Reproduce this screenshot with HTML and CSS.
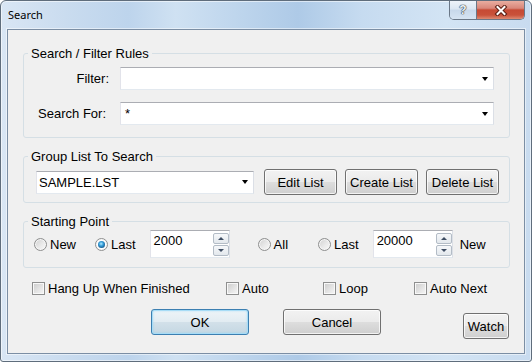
FILE: index.html
```html
<!DOCTYPE html>
<html lang="en">
<head>
  <meta charset="UTF-8" />
  <meta name="viewport" content="width=device-width, initial-scale=1" />
  <title>Search</title>
  <link rel="stylesheet" href="styles.css">
</head>
<body>
  <div class="window">
    <div class="titlebar">
      <span class="title">Search</span>
      <div class="caption-btns">
        <span class="cap-help">?</span>
        <span class="cap-close">
          <svg width="14" height="11" viewBox="0 0 14 11">
            <path d="M3.5 2 L10.5 9 M10.5 2 L3.5 9" stroke="#5a1d12" stroke-width="4" stroke-linecap="square" fill="none"/>
            <path d="M3.5 2 L10.5 9 M10.5 2 L3.5 9" stroke="#fff" stroke-width="2" stroke-linecap="square" fill="none"/>
          </svg>
        </span>
      </div>
    </div>

    <div class="client">
      <fieldset class="group">
        <legend>Search / Filter Rules</legend>
        <div class="rules">
          <span class="rule-label">Filter:</span>
          <div class="combo combo-wide"><span class="combo-text"></span><span class="combo-arrow"></span></div>
          <span class="rule-label rule-label-search">Search For:</span>
          <div class="combo combo-wide"><span class="combo-text">*</span><span class="combo-arrow"></span></div>
        </div>
      </fieldset>

      <fieldset class="group group-list">
        <legend>Group List To Search</legend>
        <div class="list-row">
          <div class="combo combo-list"><span class="combo-text">SAMPLE.LST</span><span class="combo-arrow"></span></div>
          <button class="btn btn-list btn-edit">Edit List</button>
          <button class="btn btn-list">Create List</button>
          <button class="btn btn-list">Delete List</button>
        </div>
      </fieldset>

      <fieldset class="group group-start">
        <legend>Starting Point</legend>
        <div class="start-row">
          <label class="radio"><span class="radio-dot"></span>New</label>
          <label class="radio radio-last"><span class="radio-dot checked"></span>Last</label>
          <div class="spin spin-first">
            <span class="spin-value">2000</span>
            <span class="spin-btns"><span class="spin-up"></span><span class="spin-down"></span></span>
          </div>
          <label class="radio radio-all"><span class="radio-dot"></span>All</label>
          <label class="radio radio-last2"><span class="radio-dot"></span>Last</label>
          <div class="spin spin-second">
            <span class="spin-value">20000</span>
            <span class="spin-btns"><span class="spin-up"></span><span class="spin-down"></span></span>
          </div>
          <span class="start-new">New</span>
        </div>
      </fieldset>

      <div class="checks">
        <label class="check"><span class="check-box"></span>Hang Up When Finished</label>
        <label class="check"><span class="check-box"></span>Auto</label>
        <label class="check"><span class="check-box"></span>Loop</label>
        <label class="check"><span class="check-box"></span>Auto Next</label>
      </div>

      <div class="actions">
        <button class="btn btn-main btn-default">OK</button>
        <button class="btn btn-main btn-cancel">Cancel</button>
        <button class="btn btn-watch">Watch</button>
      </div>
    </div>
  </div>
</body>
</html>
```

FILE: styles.css
```css
:root {
  --font-ui: 'Liberation Sans', Arial, sans-serif;
  --font-title: 'Noto Sans', 'Liberation Sans', sans-serif;
  --client-bg: #f0f0f0;
  --group-border: #d5dfe5;
  --btn-border: #707070;
  --edit-border: #abadb3 #dbdfe6 #e3e9ef #e2e3ea;
}
*, *::before, *::after { box-sizing: border-box; }

html, body {
  margin: 0;
  padding: 0;
}
body {
  width: 532px;
  height: 362px;
  overflow: hidden;
  font-family: var(--font-ui);
  font-size: 13px;
  line-height: 15px;
  color: #000;
  background: #fff;
}

/* window frame */
.window {
  width: 532px;
  height: 362px;
  display: flex;
  flex-direction: column;
  padding: 0 6px 7px;
  border: 1px solid #5f6d7c;
  border-radius: 6px 6px 3px 3px;
  background:
    linear-gradient(to right, #d9e6f4 0%, #cadcef 12%, #bdd4ec 24%, #cfe1f2 33%, #bfd6ed 44%, #aecae7 56%, #c6dbf0 68%, #d3e4f4 84%, #c8dbef 100%);
  box-shadow: inset 0 0 0 1px rgba(255,255,255,0.55);
}
.titlebar {
  height: 28px;
  display: flex;
  align-items: flex-start;
}
.title {
  align-self: center;
  padding-left: 1px;
  font-family: var(--font-title);
  font-size: 11px;
  line-height: 14px;
}
.caption-btns {
  margin-left: auto;
  display: flex;
  height: 19px;
  border: 1px solid #6a7787;
  border-top: none;
  border-radius: 0 0 5px 5px;
  overflow: hidden;
}
.cap-help {
  width: 27px;
  display: flex;
  align-items: center;
  justify-content: center;
  border-right: 1px solid #6a7787;
  background: linear-gradient(#eef3f9 0%, #dbe6f2 45%, #c8d8ea 50%, #d6e4f2 100%);
  font-weight: bold;
  font-size: 12px;
  color: #eef2f6;
  text-shadow: 0 0 1px #2f3a46, 0 0 1px #2f3a46, 0 0 1px #2f3a46;
}
.cap-close {
  width: 47px;
  display: flex;
  align-items: center;
  justify-content: center;
  background: linear-gradient(#e9ada0 0%, #d9877a 40%, #c64a34 50%, #c9513a 78%, #dd8a72 100%);
}

/* client area */
.client {
  flex: 1;
  display: flex;
  flex-direction: column;
  padding: 16px 14px 0 15px;
  background: var(--client-bg);
  border: 1px solid #7b8ea4;
  box-shadow: 0 0 0 1px rgba(255,255,255,0.5);
}

.group {
  margin: 0;
  padding: 0;
  min-width: 0;
  border: 1px solid var(--group-border);
  border-radius: 3px;
}
.group legend {
  margin-left: 4px;
  padding: 0 3px;
  line-height: 15px;
}
.group-list, .group-start { margin-top: 11px; }

.rules {
  display: grid;
  grid-template-columns: 85px 374px;
  grid-auto-rows: 23px;
  column-gap: 11px;
  row-gap: 12px;
  padding: 6px 0 12px;
  align-items: center;
}
.rule-label { justify-self: end; }
.rule-label-search { margin-right: 3px; }

/* combo boxes */
.combo {
  display: flex;
  align-items: center;
  height: 23px;
  background: #fff;
  border: 1px solid;
  border-color: var(--edit-border);
}
.combo-text {
  flex: 1;
  padding-left: 3px;
}
.combo-wide .combo-text { padding-left: 4px; }
.combo-arrow {
  width: 16px;
  display: flex;
  justify-content: center;
}
.combo-arrow::after {
  content: '';
  border-left: 3.5px solid transparent;
  border-right: 3.5px solid transparent;
  border-top: 4px solid #000;
}
.combo-list {
  width: 218px;
  margin-right: 10px;
}
.combo-list .combo-text { padding-left: 2px; }

.list-row {
  display: flex;
  align-items: center;
  gap: 8px;
  padding: 5px 0 7px 12px;
}

/* buttons */
.btn {
  height: 26px;
  padding: 0;
  font-family: var(--font-ui);
  font-size: 13px;
  color: #000;
  border: 1px solid var(--btn-border);
  border-radius: 3px;
  background: linear-gradient(#f2f2f2 0%, #ebebeb 48%, #dddddd 52%, #cfcfcf 100%);
  box-shadow: inset 0 0 0 1px rgba(255,255,255,0.75);
}
.btn-list { width: 73px; }
.btn-edit { margin-left: -8px; }
.btn-main { width: 98px; }
.btn-default {
  border-color: #3c7fb1;
  background: linear-gradient(#eef4f8 0%, #e2ecf2 48%, #d2e0e9 52%, #c4d7e3 100%);
  box-shadow: inset 0 0 0 1px #a7dcf6, inset 0 0 3px #7fcdf3;
}
.btn-cancel { margin-left: 34px; }
.btn-watch {
  width: 46px;
  margin-left: 82px;
  margin-top: 4px;
}

/* starting point */
.start-row {
  display: flex;
  align-items: center;
  padding: 1px 0 9px 10px;
}
.radio {
  display: flex;
  align-items: center;
  gap: 3px;
}
.radio-dot {
  width: 13px;
  height: 13px;
  display: flex;
  align-items: center;
  justify-content: center;
  border: 1px solid #8e8f8f;
  border-radius: 50%;
  background: linear-gradient(135deg, #d0d0d0 0%, #ececec 60%, #f8f8f8 100%);
  box-shadow: inset 0 0 0 1px #f6f6f6;
}
.radio-dot.checked {
  background: #fff;
}
.radio-dot.checked::after {
  content: '';
  width: 7px;
  height: 7px;
  border-radius: 50%;
  background: radial-gradient(circle at 45% 40%, #b6ecff 0%, #3aa2dc 35%, #155a8e 75%, #0d3c66 100%);
}
.radio-last { margin-left: 19px; }
.spin-first { margin-left: 14px; }
.radio-all { margin-left: 28px; }
.radio-last2 { margin-left: 30px; }
.spin-second { margin-left: 14px; }
.start-new { margin-left: 7px; }

.spin {
  width: 80px;
  height: 28px;
  display: flex;
  background: #fff;
  border: 1px solid;
  border-color: var(--edit-border);
}
.spin-value {
  flex: 1;
  padding: 2px 0 0 3px;
}
.spin-btns {
  width: 16px;
  display: flex;
  flex-direction: column;
  gap: 1px;
  margin: 2px 0 1px;
}
.spin-up, .spin-down {
  flex: 1;
  display: flex;
  align-items: center;
  justify-content: center;
  border: 1px solid #b3bcc6;
  border-radius: 2px;
  background: linear-gradient(#f6f8fa, #e3e8ed);
}
.spin-up::after {
  content: '';
  border-left: 3px solid transparent;
  border-right: 3px solid transparent;
  border-bottom: 3px solid #3e4d63;
}
.spin-down::after {
  content: '';
  border-left: 3px solid transparent;
  border-right: 3px solid transparent;
  border-top: 3px solid #3e4d63;
}

/* checkboxes */
.checks {
  display: grid;
  grid-template-columns: 194px 97px 91px auto;
  margin-top: 13px;
  padding-left: 9px;
}
.check {
  display: flex;
  align-items: center;
  gap: 3px;
}
.check-box {
  width: 13px;
  height: 13px;
  border: 1px solid #8e8f8f;
  background: linear-gradient(135deg, #cbcbcb 0%, #e6e6e6 60%, #f6f6f6 100%);
  box-shadow: inset 0 0 0 1px #f8f8f8;
}

.actions {
  display: flex;
  align-items: flex-start;
  margin-top: 13px;
  padding-left: 128px;
}
```
